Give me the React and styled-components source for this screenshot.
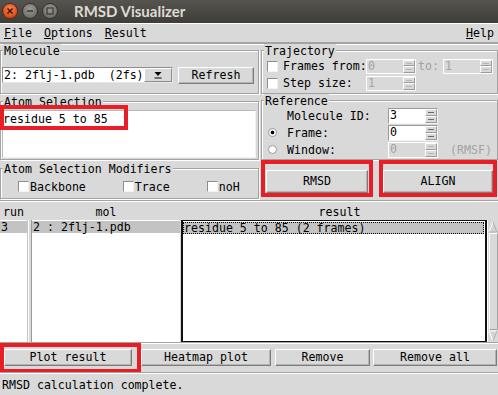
import React from 'react'
import styled, { createGlobalStyle } from 'styled-components'

const mono = '"DejaVu Sans Mono", "Liberation Mono", monospace'
const bg = '#d9d9d9'
const dark = '#a3a3a3'
const red = '#e81d25'

const GlobalStyle = createGlobalStyle`
  html, body { margin: 0; padding: 0; background: ${bg}; }
  body {
    width: 498px; height: 395px; overflow: hidden;
    font-family: ${mono}; font-size: 11.6px; color: #000;
  }
  * { box-sizing: border-box; }
`

const Window = styled.div`
  width: 498px;
  height: 395px;
  display: flex;
  flex-direction: column;
  white-space: nowrap;
`

const TitleBar = styled.div`
  height: 23px;
  display: flex;
  align-items: center;
  padding-left: 2px;
  gap: 4px;
  background: linear-gradient(#56544e, #3e3d39);
`
const WinButton = styled.span`
  width: 16px;
  height: 16px;
  border-radius: 50%;
  display: flex;
  align-items: center;
  justify-content: center;
  border: 1px solid ${p => (p.$close ? '#5b2a18' : '#34332f')};
  background: ${p =>
    p.$close
      ? 'radial-gradient(circle at 50% 35%, #f5895a, #df4a16 70%)'
      : 'radial-gradient(circle at 50% 35%, #9a9892, #75736d 70%)'};
`
const Title = styled.span`
  margin-left: 12px;
  font-family: Lato, "DejaVu Sans", sans-serif;
  font-weight: 700;
  font-size: 15px;
  color: #dfdbd2;
`

const MenuBar = styled.div`
  height: 21px;
  display: flex;
  align-items: center;
  border-top: 1px solid #fff;
  border-bottom: 2px solid ${dark};
  box-shadow: 0 1px 0 #fff;
`
const MenuItem = styled.span`
  padding: 0 4px;
  margin-right: ${p => (p.$last ? '0' : '4px')};
  margin-left: ${p => (p.$right ? 'auto' : '0')};
  u { text-decoration: underline; text-underline-offset: 1px; }
`

const Top = styled.div`
  display: grid;
  grid-template-columns: 259px 1fr;
  column-gap: 2px;
  position: relative;
  z-index: 1;
`
const Column = styled.div`
  display: flex;
  flex-direction: column;
`

const Group = styled.fieldset`
  margin: ${p => p.$mt || 0}px 0 0 0;
  padding: 0;
  min-width: 0;
  border: 1px solid ${dark};
  box-shadow: inset 1px 1px 0 #fff, 1px 1px 0 #fff;
`
const Legend = styled.legend`
  margin-left: 2px;
  padding: 0 1px;
  line-height: 14px;
  background: ${bg};
`

const MoleculeRow = styled.div`
  display: flex;
  align-items: center;
  gap: 5px;
  padding: 9px 2px 9px 1px;
`
const Dropdown = styled.div`
  width: 171px;
  height: 16px;
  display: flex;
  align-items: center;
  background: #fff;
  border: 1px solid;
  border-color: #8e8e8e #e6e6e6 #e6e6e6 #8e8e8e;
  white-space: pre;
  padding-left: 1px;
  span { flex: 1; line-height: 14px; }
`
const DropArrow = styled.span`
  width: 12px;
  height: 14px;
  display: flex;
  align-items: center;
  justify-content: center;
  background: ${bg};
  border: 1px solid;
  border-color: #fff #8e8e8e #8e8e8e #fff;
`

const Button = styled.button`
  appearance: none;
  width: ${p => p.$w}px;
  height: ${p => p.$h || 17}px;
  padding: 0;
  font-family: ${mono};
  font-size: 11.6px;
  font-weight: 400;
  line-height: 13px;
  color: #000;
  background: ${bg};
  border: 1px solid;
  border-color: #fff #7d7d7d #7d7d7d #fff;
  box-shadow: inset -1px -1px 0 #b3b3b3;
  flex-shrink: 0;
`

const SelectionBody = styled.div`
  padding: 1px 2px 1px 1px;
`
const TextBox = styled.div`
  position: relative;
  height: 48px;
  background: #fff;
  border: 1px solid;
  border-color: #b8b8b8 #f0f0f0 #f0f0f0 #b8b8b8;
  padding: 1px 0 0 0;
  line-height: 14px;
`
const Highlight = styled.div`
  position: absolute;
  left: ${p => p.$x}px;
  top: ${p => p.$y}px;
  width: ${p => p.$w}px;
  height: ${p => p.$h}px;
  border: 4px solid ${red};
  pointer-events: none;
`

const ModifierRow = styled.div`
  display: flex;
  align-items: center;
  gap: 37px;
  padding: 5px 0 5px 17px;
  box-sizing: content-box;
  height: 12px;
`
const CheckLabel = styled.label`
  display: flex;
  align-items: center;
  line-height: 12px;
`
const CheckBox = styled.span`
  width: 11px;
  height: 11px;
  background: #fff;
  border: 1px solid;
  border-color: #8e8e8e #f2f2f2 #f2f2f2 #8e8e8e;
  margin-right: ${p => p.$gap || 1}px;
  flex-shrink: 0;
`

const TrajBody = styled.div`
  display: flex;
  flex-direction: column;
  gap: 2px;
  padding: 1px 0 2px 5px;
`
const RefBody = styled.div`
  display: flex;
  flex-direction: column;
  gap: 1px;
  padding: 0 0 1px 6px;
`
const FormRow = styled.div`
  display: flex;
  align-items: center;
  height: ${p => p.$h || 16}px;
`
const FieldLabel = styled.span`
  width: ${p => p.$w}px;
  flex-shrink: 0;
  white-space: nowrap;
  color: ${p => (p.$off ? '#a3a3a3' : '#000')};
`
const Note = styled.span`
  margin: 0 ${p => p.$mr || 0}px 0 ${p => p.$ml || 0}px;
  color: ${p => (p.$off ? '#a3a3a3' : '#000')};
`
const Radio = styled.span`
  width: 9px;
  height: 9px;
  border-radius: 50%;
  margin-right: 10px;
  flex-shrink: 0;
  border: 1px solid #9a9a9a;
  visibility: ${p => (p.$hidden ? 'hidden' : 'visible')};
  background: ${p =>
    p.$on ? 'radial-gradient(circle, #000 0 1.6px, #fff 2.2px)' : '#fff'};
`

const SpinBox = styled.span`
  width: 50px;
  height: ${p => p.$h || 16}px;
  display: flex;
  flex-shrink: 0;
  background: ${p => (p.$off ? bg : '#fff')};
  color: ${p => (p.$off ? '#a3a3a3' : '#000')};
  border: 1px solid;
  border-color: ${p => (p.$off ? '#fff' : '#9a9a9a #f2f2f2 #f2f2f2 #9a9a9a')};
  span.v { flex: 1; padding-left: 1px; line-height: 13px; }
`
const SpinArrows = styled.span`
  width: 12px;
  display: flex;
  flex-direction: column;
  background: ${bg};
`
const SpinHalf = styled.span`
  flex: 1;
  display: flex;
  align-items: center;
  justify-content: center;
  border: 1px solid;
  border-color: #fff #9a9a9a #9a9a9a #fff;
  &::after {
    content: '';
    width: 6px;
    height: 1px;
    background: ${p => (p.$off ? '#b5b5b5' : '#6a6a6a')};
  }
`

const ActionRow = styled.div`
  display: flex;
  gap: 6px;
  height: 37px;
`
const RedBox = styled.div`
  width: ${p => p.$w}px;
  height: ${p => (p.$h ? `${p.$h}px` : 'auto')};
  border: 4px solid ${red};
  display: flex;
  align-items: ${p => p.$align || 'flex-end'};
  justify-content: center;
  padding: ${p => p.$pad || '0'};
  flex-shrink: 0;
`

const Divider = styled.div`
  margin-top: 1px;
  border-top: 1px solid ${dark};
  border-bottom: 1px solid #fff;
`

const cols = '27px 5px 148px 1px 306px 11px'
const Header = styled.div`
  display: grid;
  grid-template-columns: ${cols};
  height: 18px;
  padding-top: 3px;
  line-height: 14px;
`
const HeadCell = styled.span`
  grid-column: ${p => p.$col};
  text-align: ${p => (p.$left ? 'left' : 'center')};
  padding-left: ${p => (p.$left ? '3px' : '0')};
`
const List = styled.div`
  display: grid;
  grid-template-columns: ${cols};
  height: 123px;
`
const ListCol = styled.div`
  background: #fff;
  padding-top: 1px;
`
const Gutter = styled.div`
  background: ${bg};
  ${p =>
    p.$plain
      ? ''
      : `border-left: 1px solid #c4c4c4;
  border-right: 1px solid #9a9a9a;
  box-shadow: inset 1px 0 0 #fff;`}
`
const ResultCol = styled.div`
  background: #fff;
  border: 1px solid #111;
  border-left-width: 2px;
  border-right-width: 2px;
  padding: 1px 1px 0 0;
`
const ListRow = styled.div`
  height: 12px;
  line-height: 12px;
  white-space: pre;
  padding-left: 1px;
  background: ${p => (p.$sel ? '#c3c3c3' : 'transparent')};
  outline: ${p => (p.$focus ? '1px dotted #000' : 'none')};
  outline-offset: -1px;
`
const ScrollBar = styled.div`
  display: flex;
  flex-direction: column;
  background: ${bg};
  border-left: 1px solid #fff;
  padding-top: 1px;
`
const ScrollArrow = styled.span`
  height: 12px;
  display: flex;
  justify-content: center;
`
const ScrollThumb = styled.span`
  flex: 1;
  margin: 0 0 0 1px;
  border: 1px solid;
  border-color: #fff #a3a3a3 #a3a3a3 #fff;
`

const ButtonRow = styled.div`
  height: 30px;
  display: flex;
  align-items: center;
  gap: ${p => p.$gap || 0}px;
  border-top: 1px solid ${dark};
  box-shadow: inset 0 1px 0 #fff;
`
const Status = styled.div`
  height: 23px;
  display: flex;
  align-items: center;
  padding: 1px 0 0 2px;
  border-top: 1px solid ${dark};
  box-shadow: inset 0 1px 0 #fff;
`

const Spin = ({ value, off, h }) => (
  <SpinBox $off={off} $h={h}>
    <span className="v">{value}</span>
    <SpinArrows>
      <SpinHalf $off={off} />
      <SpinHalf $off={off} />
    </SpinArrows>
  </SpinBox>
)

const Arrow = ({ up }) => (
  <ScrollArrow>
    <svg width="10" height="12" viewBox="0 0 10 12">
      {up ? (
        <>
          <polygon points="5,1 9,11 1,11" fill="#d4d4d4" />
          <polyline points="1,11 5,1" fill="none" stroke="#fff" strokeWidth="1" />
          <polyline points="5,1 9,11 1,11" fill="none" stroke="#b0b0b0" strokeWidth="1" />
        </>
      ) : (
        <>
          <polygon points="1,1 9,1 5,11" fill="#d4d4d4" />
          <polyline points="5,11 1,1 9,1" fill="none" stroke="#fff" strokeWidth="1" />
          <polyline points="9,1 5,11" fill="none" stroke="#b0b0b0" strokeWidth="1" />
        </>
      )}
    </svg>
  </ScrollArrow>
)

export default function App() {
  return (
    <>
      <GlobalStyle />
      <Window>
        <TitleBar>
          <WinButton $close>
            <svg width="8" height="8" viewBox="0 0 8 8">
              <path d="M1.5 1.5 L6.5 6.5 M6.5 1.5 L1.5 6.5" stroke="#3a160a" strokeWidth="1.5" />
            </svg>
          </WinButton>
          <WinButton>
            <svg width="8" height="8" viewBox="0 0 8 8">
              <path d="M1 4 H7" stroke="#3a3935" strokeWidth="1.5" />
            </svg>
          </WinButton>
          <WinButton>
            <svg width="8" height="8" viewBox="0 0 8 8">
              <rect x="1" y="1" width="6" height="6" fill="none" stroke="#3a3935" strokeWidth="1.2" />
            </svg>
          </WinButton>
          <Title>RMSD Visualizer</Title>
        </TitleBar>

        <MenuBar>
          <MenuItem><u>F</u>ile</MenuItem>
          <MenuItem><u>O</u>ptions</MenuItem>
          <MenuItem><u>R</u>esult</MenuItem>
          <MenuItem $right $last><u>H</u>elp</MenuItem>
        </MenuBar>

        <Top>
          <Column>
            <Group>
              <Legend>Molecule</Legend>
              <MoleculeRow>
                <Dropdown>
                  <span>2: 2flj-1.pdb  (2fs)</span>
                  <DropArrow>
                    <svg width="8" height="8" viewBox="0 0 8 8">
                      <polygon points="0.5,1 7.5,1 4,5" fill="#000" />
                      <rect x="0.5" y="6.5" width="7" height="1" fill="#000" />
                    </svg>
                  </DropArrow>
                </Dropdown>
                <Button $w={76}>Refresh</Button>
              </MoleculeRow>
            </Group>

            <Group $mt={1}>
              <Legend>Atom Selection</Legend>
              <SelectionBody>
                <TextBox>
                  residue 5 to 85
                  <Highlight $x={-3} $y={-6} $w={128} $h={25} />
                </TextBox>
              </SelectionBody>
            </Group>

            <Group $mt={2}>
              <Legend>Atom Selection Modifiers</Legend>
              <ModifierRow>
                <CheckLabel><CheckBox />Backbone</CheckLabel>
                <CheckLabel><CheckBox />Trace</CheckLabel>
                <CheckLabel><CheckBox />noH</CheckLabel>
              </ModifierRow>
            </Group>
          </Column>

          <Column>
            <Group>
              <Legend>Trajectory</Legend>
              <TrajBody>
                <FormRow $h={15}>
                  <CheckBox $gap={5} />
                  <FieldLabel $w={83}>Frames from:</FieldLabel>
                  <Spin value="0" off h={15} />
                  <Note $ml={2} $mr={4} $off>to:</Note>
                  <Spin value="1" off h={15} />
                </FormRow>
                <FormRow $h={15}>
                  <CheckBox $gap={5} />
                  <FieldLabel $w={83}>Step size:</FieldLabel>
                  <Spin value="1" off h={15} />
                </FormRow>
              </TrajBody>
            </Group>

            <Group>
              <Legend>Reference</Legend>
              <RefBody>
                <FormRow>
                  <Radio $hidden />
                  <FieldLabel $w={101}>Molecule ID:</FieldLabel>
                  <Spin value="3" />
                </FormRow>
                <FormRow>
                  <Radio $on />
                  <FieldLabel $w={101}>Frame:</FieldLabel>
                  <Spin value="0" />
                </FormRow>
                <FormRow>
                  <Radio />
                  <FieldLabel $w={101}>Window:</FieldLabel>
                  <Spin value="0" off />
                  <Note $ml={12} $off>(RMSF)</Note>
                </FormRow>
              </RefBody>
            </Group>

            <ActionRow>
              <RedBox $w={112} $pad="0 1px">
                <Button $w={102} $h={23}>RMSD</Button>
              </RedBox>
              <RedBox $w={118}>
                <Button $w={110} $h={23}>ALIGN</Button>
              </RedBox>
            </ActionRow>
          </Column>
        </Top>

        <Divider />

        <Header>
          <HeadCell $col="1" $left>run</HeadCell>
          <HeadCell $col="3">mol</HeadCell>
          <HeadCell $col="5 / 7">result</HeadCell>
        </Header>

        <List>
          <ListCol>
            <ListRow $sel>3</ListRow>
          </ListCol>
          <Gutter />
          <ListCol>
            <ListRow $sel>2 : 2flj-1.pdb</ListRow>
          </ListCol>
          <Gutter $plain />
          <ResultCol>
            <ListRow $sel $focus>residue 5 to 85 (2 frames)</ListRow>
          </ResultCol>
          <ScrollBar>
            <Arrow up />
            <ScrollThumb />
            <Arrow />
          </ScrollBar>
        </List>

        <ButtonRow>
          <RedBox $w={141} $h={30} $align="center" $pad="0 5px 1px 0">
            <Button $w={128}>Plot result</Button>
          </RedBox>
          <Button $w={130}>Heatmap plot</Button>
          <Button $w={95} style={{ marginLeft: 4 }}>Remove</Button>
          <Button $w={124} style={{ marginLeft: 3 }}>Remove all</Button>
        </ButtonRow>

        <Status>RMSD calculation complete.</Status>
      </Window>
    </>
  )
}
